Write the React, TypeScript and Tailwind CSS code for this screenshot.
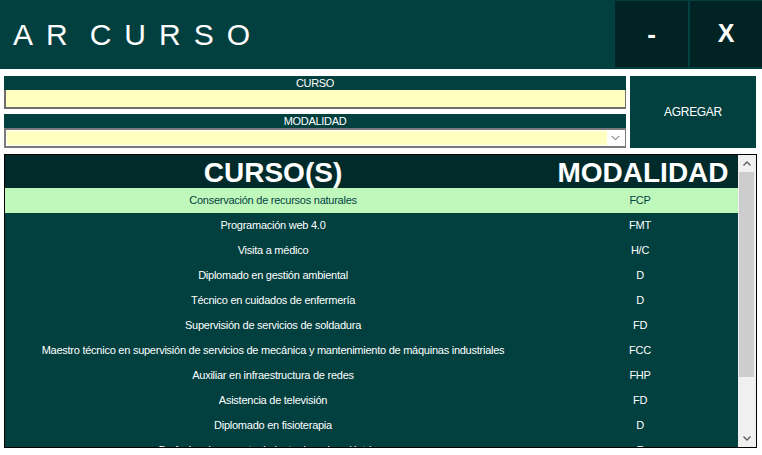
import React from 'react';

const rows = [
  { curso: 'Conservación de recursos naturales', modalidad: 'FCP' },
  { curso: 'Programación web 4.0', modalidad: 'FMT' },
  { curso: 'Visita a médico', modalidad: 'H/C' },
  { curso: 'Diplomado en gestión ambiental', modalidad: 'D' },
  { curso: 'Técnico en cuidados de enfermería', modalidad: 'D' },
  { curso: 'Supervisión de servicios de soldadura', modalidad: 'FD' },
  { curso: 'Maestro técnico en supervisión de servicios de mecánica y mantenimiento de máquinas industriales', modalidad: 'FCC' },
  { curso: 'Auxiliar en infraestructura de redes', modalidad: 'FHP' },
  { curso: 'Asistencia de televisión', modalidad: 'FD' },
  { curso: 'Diplomado en fisioterapia', modalidad: 'D' },
  { curso: 'Profesional en mantenimiento de redes eléctricas', modalidad: 'F' },
];

export default function App() {
  const selected = 0;

  return (
    <div className="w-[762px] h-[455px] bg-white overflow-hidden font-['Liberation_Sans',Arial,sans-serif]">
      {/* barra de titulo */}
      <div className="h-[69px] bg-[#023f3f] flex items-start">
        <div className="flex-1 h-full flex items-center pl-[13px] text-white text-[30px] tracking-[13px] leading-none pt-[1px]">
          <span>AR</span>
          <span className="ml-[9px]">CURSO</span>
        </div>
        <button className="mt-[1px] w-[73px] h-[66px] bg-[#012323] text-white text-[26px] font-bold flex items-center justify-center">-</button>
        <button className="mt-[1px] ml-[2px] w-[72px] h-[66px] bg-[#012323] text-white text-[25px] font-bold flex items-center justify-center">X</button>
      </div>

      {/* formulario */}
      <div className="flex mt-[7px] pl-[4px] pr-[6px] gap-[4px]">
        <div className="w-[622px] flex flex-col">
          <div className="h-[14px] bg-[#023f3f] text-white text-[11px] tracking-[-0.3px] leading-[14px] text-center">CURSO</div>
          <div className="h-[19px] bg-[#ffffc0] border-l-2 border-r border-b-2 border-[#6e6e6e]"></div>
          <div className="h-[14px] mt-[5px] bg-[#023f3f] text-white text-[11px] tracking-[-0.3px] leading-[14px] text-center">MODALIDAD</div>
          <div className="h-[20px] bg-white border-2 border-r border-[#7a7a7a] flex items-stretch p-[1px]">
            <div className="flex-1 bg-[#ffffc0]"></div>
            <div className="w-[17px] flex items-center justify-center">
              <svg width="9" height="6" viewBox="0 0 9 6">
                <path d="M0.5 0.8 L4.5 4.8 L8.5 0.8" fill="none" stroke="#555" strokeWidth="1" />
              </svg>
            </div>
          </div>
        </div>
        <button className="w-[126px] h-[72px] bg-[#023f3f] text-white text-[12px] tracking-[-0.3px] flex items-center justify-center">AGREGAR</button>
      </div>

      {/* lista */}
      <div className="ml-[4px] mt-[6px] w-[753px] h-[294px] border border-black flex">
        <div className="w-[733px] h-full overflow-hidden bg-[#023f3f]">
          <div className="h-[33px] bg-[#012b2b] flex text-white text-[28px] font-bold leading-none">
            <div className="w-[536px] shrink-0 flex items-center justify-center pt-[2px]">CURSO(S)</div>
            <div className="w-[204px] shrink-0 flex items-center justify-center pt-[2px]">MODALIDAD</div>
          </div>
          {rows.map((r, i) => (
            <div
              key={i}
              className={`h-[25px] flex items-center text-[11px] tracking-[-0.25px] ${i === selected ? 'bg-[#c0f8bc] text-[#023f3f]' : 'text-white'}`}
            >
              <div className="w-[536px] shrink-0 text-center whitespace-nowrap">{r.curso}</div>
              <div className="w-[198px] shrink-0 text-center">{r.modalidad}</div>
            </div>
          ))}
        </div>
        <div className="w-[18px] h-full bg-[#f0f0f0] flex flex-col">
          <div className="h-[17px] flex items-center justify-center">
            <svg width="8" height="5" viewBox="0 0 8 5">
              <path d="M0.5 4.5 L4 1 L7.5 4.5" fill="none" stroke="#606060" strokeWidth="1.4" />
            </svg>
          </div>
          <div className="ml-[1px] w-[15px] h-[205px] bg-[#cdcdcd]"></div>
          <div className="flex-1"></div>
          <div className="h-[17px] flex items-center justify-center">
            <svg width="8" height="5" viewBox="0 0 8 5">
              <path d="M0.5 0.5 L4 4 L7.5 0.5" fill="none" stroke="#606060" strokeWidth="1.4" />
            </svg>
          </div>
        </div>
      </div>
    </div>
  );
}
